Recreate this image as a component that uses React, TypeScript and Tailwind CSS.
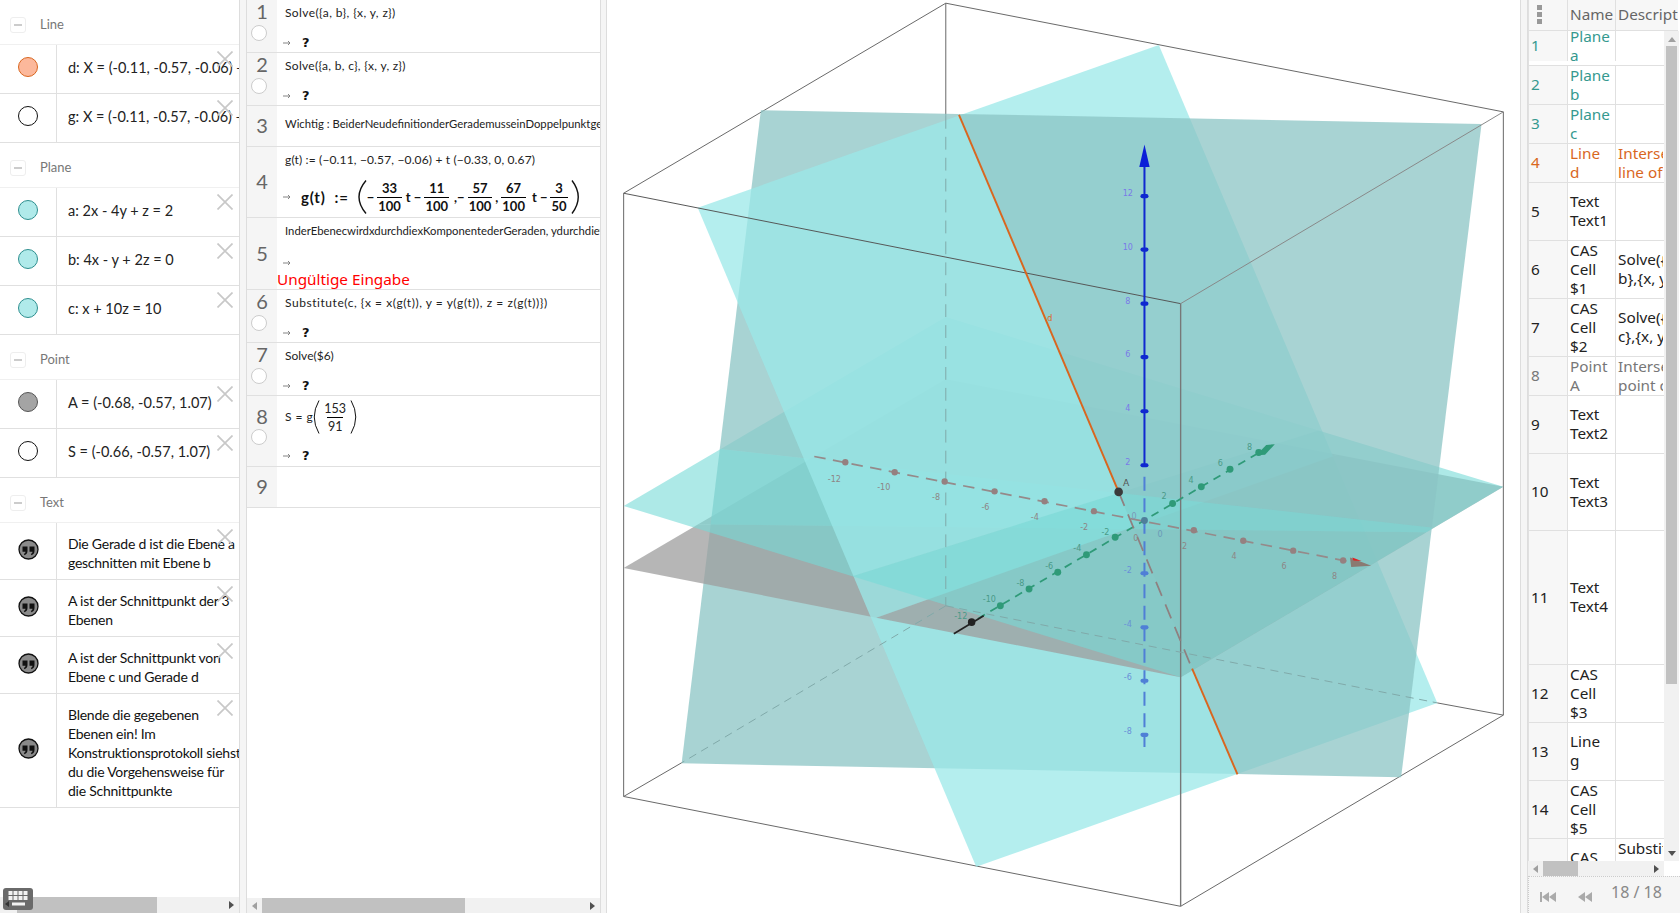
import React from "react";

type P = [number, number];
const half = (poly: P[], p: P, q: P, below: boolean): P[] => {
  const side = (a: P) => {
    const c = (q[0] - p[0]) * (a[1] - p[1]) - (q[1] - p[1]) * (a[0] - p[0]);
    return below ? c : -c;
  };
  const out: P[] = [];
  poly.forEach((a, i) => {
    const b = poly[(i + 1) % poly.length];
    const sa = side(a);
    const sb = side(b);
    if (sa >= 0) out.push(a);
    if (sa * sb < 0) {
      const t = sa / (sa - sb);
      out.push([a[0] + (b[0] - a[0]) * t, a[1] + (b[1] - a[1]) * t]);
    }
  });
  return out;
};
const pts = (poly: P[]) => poly.map((a) => a.join(",")).join(" ");

const planeA: P[] = [[955, 75], [1440, 1207], [637, 1489], [152, 355]];
const planeB: P[] = [[262, 187], [1517, 211], [1377, 1335], [124, 1311]];
const planeC: P[] = [[23, 868], [584, 543], [1555, 835], [993, 1163]];
const planeG: P[] = [[23, 975], [584, 650], [1555, 835], [993, 1163]];
const D1: P = [607, 195];
const D2: P = [1092, 1330];
const LCA: [P, P] = [[425, 988], [1250, 733]];
const LCB: [P, P] = [[192, 770], [1430, 905]];
const LGA: [P, P] = [[455, 1063], [1300, 768]];
const LGB: [P, P] = [[175, 900], [1300, 912]];
const cell = (poly: P[], la: [P, P], lb: [P, P], plusA: boolean, plusB: boolean) =>
  half(half(poly, la[0], la[1], plusA), lb[0], lb[1], plusB);

const colA = "rgba(155,232,232,0.75)";
const colB = "rgba(139,196,196,0.75)";
const colC = "rgba(118,218,215,0.6)";
const colG = "rgba(157,157,157,0.75)";

const xTicks: P[] = [[409, 793], [495, 810], [582, 826], [669, 843], [756, 860], [842, 877], [1016, 910], [1102, 928], [1189, 945], [1276, 962]];
const xLabels: [number, number, string][] = [[390, 827, "-12"], [476, 841, "-10"], [567, 858, "-8"], [653, 875, "-6"], [739, 893, "-4"], [825, 910, "-2"], [1000, 943, "2"], [1086, 960, "4"], [1173, 977, "6"], [1261, 994, "8"]];
const yTicks: P[] = [[679, 1040], [729, 1011], [779, 982], [829, 952], [879, 922], [979, 864], [1029, 835], [1079, 805], [1129, 776]];
const yLabels: [number, number, string][] = [[610, 1063, "-12"], [660, 1033, "-10"], [714, 1005, "-8"], [764, 976, "-6"], [813, 946, "-4"], [862, 918, "-2"], [964, 856, "2"], [1011, 828, "4"], [1062, 799, "6"], [1113, 771, "8"]];
const zUp: [number, string][] = [[335, "12"], [427, "10"], [520, "8"], [612, "6"], [705, "4"], [798, "2"]];
const zDown: [number, string][] = [[984, "-2"], [1077, "-4"], [1169, "-6"], [1262, "-8"]];

function Scene() {
  const labelFont = { fontFamily: "'DejaVu Sans', sans-serif" };
  return (
    <svg className="block w-full h-full" viewBox="-6 -2.5 1590 1571" preserveAspectRatio="none">
      <g stroke="#666" strokeWidth="1.7" fill="none">
        <polyline points="584,197 584,3 23,330 23,1368 993,1557 1555,1228 1555,190 584,3" />
      </g>
      <polygon points={pts(cell(planeG, LGA, LGB, false, false))} fill={colG} />
      <polygon points={pts(cell(planeC, LCA, LCB, false, false))} fill={colC} />
      <polygon points={pts(half(planeB, D1, D2, true))} fill={colB} />
      <polygon points={pts(cell(planeG, LGA, LGB, false, true))} fill={colG} />
      <polygon points={pts(cell(planeC, LCA, LCB, false, true))} fill={colC} />
      <polygon points={pts(planeA)} fill={colA} />
      <polygon points={pts(cell(planeG, LGA, LGB, true, false))} fill={colG} />
      <polygon points={pts(cell(planeC, LCA, LCB, true, false))} fill={colC} />
      <polygon points={pts(half(planeB, D1, D2, false))} fill={colB} />
      <polygon points={pts(cell(planeG, LGA, LGB, true, true))} fill={colG} />
      <polygon points={pts(cell(planeC, LCA, LCB, true, true))} fill={colC} />

      <g fill="none" strokeWidth="1.7">
        <line x1="23" y1="330" x2="993" y2="520" stroke="#555" />
        <line x1="993" y1="520" x2="1555" y2="190" stroke="#888" />
        <line x1="993" y1="520" x2="993" y2="1557" stroke="#777" strokeWidth="2.4" />
        <line x1="584" y1="197" x2="584" y2="1040" stroke="#7fa8a8" strokeDasharray="22 14" />
        <line x1="584" y1="1040" x2="124" y2="1310" stroke="#7fa8a8" strokeDasharray="14 10" />
        <line x1="584" y1="1040" x2="1440" y2="1207" stroke="#7fa8a8" strokeDasharray="14 10" />
        <line x1="124" y1="1310" x2="23" y2="1368" stroke="#666" />
        <line x1="1440" y1="1207" x2="1555" y2="1228" stroke="#666" />
      </g>

      <line x1="355" y1="783" x2="1282" y2="963" stroke="#958a8a" strokeWidth="3" strokeDasharray="20 13" />
      <line x1="640" y1="1062" x2="1130" y2="776" stroke="#2f9a78" strokeWidth="3" strokeDasharray="14 11" />
      <line x1="598" y1="1088" x2="650" y2="1057" stroke="#222" strokeWidth="3" />
      <line x1="930" y1="818" x2="930" y2="1283" stroke="#4f7fd6" strokeWidth="3.5" strokeDasharray="24 13" />
      <line x1="930" y1="282" x2="930" y2="798" stroke="#1028d0" strokeWidth="3.5" />
      <polygon points="930,246 921,285 939,285" fill="#0a1fd8" />
      <polygon points="1125,781 1142,763 1157,762 1140,780" fill="#2f9a78" />
      <polygon points="1288,957 1325,971 1290,973" fill="#8a7a72" />
      <polygon points="1292,957 1308,963 1294,962" fill="#e02020" />

      {xTicks.map(([x, y]) => (
        <circle key={x} cx={x} cy={y} r="5.5" fill="#958080" />
      ))}
      {yTicks.map(([x, y]) => (
        <circle key={x} cx={x} cy={y} r="6" fill="#2f9a78" />
      ))}
      {zUp.map(([y]) => (
        <rect key={y} x="923" y={y - 3.5} width="14" height="7" rx="3.5" fill="#0f28d0" />
      ))}
      {zDown.map(([y]) => (
        <rect key={y} x="923" y={y - 3.5} width="14" height="7" rx="3.5" fill="#4f7fd6" />
      ))}
      <circle cx="930" cy="893" r="6" fill="#4f7f9a" />
      <circle cx="629" cy="1068" r="6.5" fill="#222" />

      <g style={labelFont} fontSize="14">
        {xLabels.map(([x, y, t]) => (
          <text key={t} x={x} y={y} fill="#8d8585" textAnchor="middle">{t}</text>
        ))}
        {yLabels.map(([x, y, t]) => (
          <text key={t} x={x} y={y} fill="#4a9a88" textAnchor="middle">{t}</text>
        ))}
        {zUp.map(([y, t]) => (
          <text key={t} x="901" y={y} fill="#7a7ae8" textAnchor="middle">{t}</text>
        ))}
        {zDown.map(([y, t]) => (
          <text key={t} x="901" y={y - 1} fill="#6a90d8" textAnchor="middle">{t}</text>
        ))}
        <text x="912" y="890" fill="#7a9ab8" textAnchor="middle">0</text>
        <text x="915" y="928" fill="#8d8585" textAnchor="middle">0</text>
        <text x="957" y="921" fill="#6a9ab8" textAnchor="middle">0</text>
        <text x="898" y="833" fill="#555" textAnchor="middle" fontSize="16">A</text>
        <text x="765" y="550" fill="#d9661f" textAnchor="middle">d</text>
      </g>

      <line x1="607" y1="195" x2="885" y2="844" stroke="#d9661f" strokeWidth="3.4" />
      <line x1="885" y1="844" x2="1012" y2="1146" stroke="#8f8080" strokeWidth="3" strokeDasharray="26 16" />
      <line x1="1013" y1="1148" x2="1092" y2="1330" stroke="#d9661f" strokeWidth="3.4" />
      <circle cx="885" cy="844" r="7.5" fill="#3a3a3a" />
    </svg>
  );
}

const cm = "font-['Lato','Open_Sans',sans-serif]";

function CloseX() {
  return (
    <svg className="absolute right-[6px] top-[6px] w-[16px] h-[16px]" viewBox="0 0 16 16">
      <path d="M0.5 0.5 L15.5 15.5 M15.5 0.5 L0.5 15.5" stroke="#c8c8c8" strokeWidth="1.7" fill="none" />
    </svg>
  );
}

function Group({ label }: { label: string }) {
  return (
    <div className="h-[45px] flex items-center border-b border-[#f0f0f0] pl-[10px] pt-[5px]">
      <div className="w-[16px] h-[16px] rounded-[3px] border border-[#eeeeee] flex items-center justify-center">
        <div className="w-[8px] h-[2px] bg-[#cccccc]" />
      </div>
      <span className={`ml-[14px] text-[13px] text-[#777777] ${cm}`}>{label}</span>
    </div>
  );
}

function Marble({ fill, border }: { fill: string; border: string }) {
  return (
    <div
      className="w-[20px] h-[20px] rounded-full border"
      style={{ backgroundColor: fill, borderColor: border }}
    />
  );
}

function QuoteMarble() {
  return (
    <svg className="w-[21px] h-[21px]" viewBox="0 0 21 21">
      <circle cx="10.5" cy="10.5" r="9.5" fill="#8a8a8a" stroke="#111" strokeWidth="1.3" />
      <path d="M4.5 7.5h5v4.5c0 2.2-1.2 3.6-3 4.2l-.6-1.2c1-.5 1.6-1.2 1.6-2.2H4.5z" fill="#111" />
      <path d="M11.5 7.5h5v4.5c0 2.2-1.2 3.6-3 4.2l-.6-1.2c1-.5 1.6-1.2 1.6-2.2h-3z" fill="#111" />
    </svg>
  );
}

function AlgRow({ h, marble, text, children }: { h: string; marble: React.ReactNode; text?: boolean; children: React.ReactNode }) {
  return (
    <div className={`relative flex border-b border-[#e0e0e0] overflow-hidden ${h}`}>
      <div className="w-[57px] shrink-0 border-r border-[#e0e0e0] flex items-center justify-center pb-[4px]">{marble}</div>
      {text ? (
        <div className={`flex-1 min-w-0 pl-[11px] pt-[11px] whitespace-nowrap text-[14px] tracking-[-0.25px] leading-[19px] text-[#111111] ${cm}`}>
          {children}
        </div>
      ) : (
        <div className={`flex-1 min-w-0 pl-[11px] pb-[4px] flex items-center whitespace-nowrap text-[14.5px] leading-[19px] text-[#222222] ${cm}`}>
          {children}
        </div>
      )}
      <CloseX />
    </div>
  );
}

function Tri({ dir, className }: { dir: "l" | "r" | "u" | "d"; className?: string }) {
  const p = { l: "6,0 6,8 1,4", r: "2,0 2,8 7,4", u: "0,6 8,6 4,1", d: "0,2 8,2 4,7" }[dir];
  return (
    <svg className={`w-[8px] h-[8px] ${className ?? ""}`} viewBox="0 0 8 8">
      <polygon points={p} fill="currentColor" />
    </svg>
  );
}

function Left() {
  const planeFill = "#b0eaea";
  const planeBorder = "#2e8f8f";
  return (
    <div className="relative w-[240px] shrink-0 h-full flex flex-col border-r border-[#dddddd]">
      <div className="flex-1 overflow-hidden">
        <Group label="Line" />
        <AlgRow h="h-[49px]" marble={<Marble fill="#fcb89b" border="#d9661f" />}>
          d: X = (-0.11, -0.57, -0.06) + t (-0.33, 0, 0.67)
        </AlgRow>
        <AlgRow h="h-[49px]" marble={<Marble fill="#ffffff" border="#111111" />}>
          g: X = (-0.11, -0.57, -0.06) + t (-0.33, 0, 0.67)
        </AlgRow>
        <Group label="Plane" />
        <AlgRow h="h-[49px]" marble={<Marble fill={planeFill} border={planeBorder} />}>a: 2x - 4y + z = 2</AlgRow>
        <AlgRow h="h-[49px]" marble={<Marble fill={planeFill} border={planeBorder} />}>b: 4x - y + 2z = 0</AlgRow>
        <AlgRow h="h-[49px]" marble={<Marble fill={planeFill} border={planeBorder} />}>c: x + 10z = 10</AlgRow>
        <Group label="Point" />
        <AlgRow h="h-[49px]" marble={<Marble fill="#a4a4a4" border="#555555" />}>A = (-0.68, -0.57, 1.07)</AlgRow>
        <AlgRow h="h-[49px]" marble={<Marble fill="#ffffff" border="#111111" />}>S = (-0.66, -0.57, 1.07)</AlgRow>
        <Group label="Text" />
        <AlgRow h="h-[57px]" text marble={<QuoteMarble />}>
          Die Gerade d ist die Ebene a<br />geschnitten mit Ebene b
        </AlgRow>
        <AlgRow h="h-[57px]" text marble={<QuoteMarble />}>
          A ist der Schnittpunkt der 3<br />Ebenen
        </AlgRow>
        <AlgRow h="h-[57px]" text marble={<QuoteMarble />}>
          A ist der Schnittpunkt von<br />Ebene c und Gerade d
        </AlgRow>
        <AlgRow h="h-[114px]" text marble={<QuoteMarble />}>
          Blende die gegebenen<br />Ebenen ein! Im<br />Konstruktionsprotokoll siehst<br />du die Vorgehensweise für<br />die Schnittpunkte
        </AlgRow>
      </div>
      <div className="h-[16px] shrink-0 bg-[#f1f1f1] flex items-center pl-[17px] pr-[4px]">
        <div className="w-[140px] h-full bg-[#c1c1c1]" />
        <Tri dir="r" className="ml-auto text-[#505050]" />
      </div>
      <svg className="absolute left-[3px] top-[888px] w-[30px] h-[22px]" viewBox="0 0 30 22">
        <rect width="30" height="22" rx="3" fill="#6a6a6a" />
        {[5, 10, 15, 20].flatMap((x) =>
          [3, 8].map((y) => <rect key={`${x}-${y}`} x={x + 0.5} y={y} width="4" height="4" fill="#f2f2f2" />)
        )}
        <rect x="9" y="14.5" width="13" height="3" fill="#f2f2f2" />
        <polygon points="2,16 6,13 6,19" fill="#333" />
      </svg>
    </div>
  );
}

function Arrow() {
  return (
    <svg className="w-[8px] h-[6px] shrink-0" viewBox="0 0 8 6">
      <path d="M0 3h6.5M5 1l2 2-2 2" stroke="#777" strokeWidth="0.9" fill="none" />
    </svg>
  );
}

function Paren({ right, w, h, sw }: { right?: boolean; w: number; h: number; sw: number }) {
  const d = right ? `M1 0.5 Q${w * 1.5} ${h / 2} 1 ${h - 0.5}` : `M${w - 1} 0.5 Q${-w * 0.5} ${h / 2} ${w - 1} ${h - 0.5}`;
  return (
    <svg className="shrink-0" width={w} height={h} viewBox={`0 0 ${w} ${h}`}>
      <path d={d} stroke="#111" strokeWidth={sw} fill="none" />
    </svg>
  );
}

function Frac({ n, d }: { n: string; d: string }) {
  return (
    <span className="inline-flex flex-col items-center leading-[15px] mx-[3px]">
      <span className="px-[1px] pb-[1px]">{n}</span>
      <span className="px-[1px] pt-[1px] border-t border-black">{d}</span>
    </span>
  );
}

function CasRow({
  num,
  h,
  marble = true,
  numTop,
  circleTop = "mt-[3px]",
  children,
}: {
  num: number;
  h: string;
  marble?: boolean;
  numTop?: string;
  circleTop?: string;
  children?: React.ReactNode;
}) {
  return (
    <div className={`flex border-b border-[#e0e0e0] overflow-hidden ${h}`}>
      <div className={`w-[30px] shrink-0 bg-[#f5f5f5] flex flex-col text-[20px] leading-[24px] text-[#666666] ${cm} ${marble ? "" : "justify-center"} ${numTop ?? ""}`}>
        <span className="text-center -translate-y-[1px]">{num}</span>
        {marble && <span className={`ml-[4px] w-[16px] h-[16px] rounded-full border-[1.5px] border-[#cccccc] bg-white -translate-y-[2px] ${circleTop}`} />}
      </div>
      <div className={`flex-1 min-w-0 flex flex-col text-[12px] leading-[16px] text-[#222222] whitespace-nowrap overflow-hidden ${cm}`}>
        {children}
      </div>
    </div>
  );
}

function Output() {
  return (
    <div className="pl-[6px] flex items-center h-[16px]">
      <Arrow />
      <span className="ml-[11px] font-bold text-[13px] text-[#111111] font-['DejaVu_Sans',sans-serif]">?</span>
    </div>
  );
}

function Cas() {
  return (
    <div className="w-[353px] shrink-0 h-full flex flex-col border-l border-r border-[#dddddd] box-content">
      <div className="flex-1 overflow-hidden">
        <CasRow num={1} h="h-[53px]">
          <div className="pl-[8px] pt-[5px] tracking-[0.4px]">Solve({"{"}a, b{"}"}, {"{"}x, y, z{"}"})</div>
          <div className="mt-[14px]"><Output /></div>
        </CasRow>
        <CasRow num={2} h="h-[53px]">
          <div className="pl-[8px] pt-[5px] tracking-[0.3px]">Solve({"{"}a, b, c{"}"}, {"{"}x, y, z{"}"})</div>
          <div className="mt-[14px]"><Output /></div>
        </CasRow>
        <CasRow num={3} h="h-[41px]" marble={false}>
          <div className="pl-[8px] pt-[10px] text-[11.3px]">Wichtig : BeiderNeudefinitionderGerademusseinDoppelpunktgesetztwerden</div>
        </CasRow>
        <CasRow num={4} h="h-[71px]" marble={false}>
          <div className="pl-[8px] pt-[5px] tracking-[0.15px]">g(t) := (−0.11, −0.57, −0.06) + t (−0.33, 0, 0.67)</div>
          <div className="pl-[6px] flex items-center mt-[12px] font-bold text-[13px] text-[#111111]">
            <Arrow />
            <span className="ml-[10px] text-[15px] tracking-[0.8px]">g(t)&nbsp;&nbsp;:=</span>
            <span className="ml-[8px]"><Paren w={10} h={34} sw={1.4} /></span>
            <span>−</span>
            <Frac n="33" d="100" />
            <span className="ml-[1px]">t −</span>
            <Frac n="11" d="100" />
            <span className="ml-[2px]">,−</span>
            <Frac n="57" d="100" />
            <span>,</span>
            <Frac n="67" d="100" />
            <span className="ml-[3px]">t −</span>
            <Frac n="3" d="50" />
            <Paren right w={9} h={34} sw={1.4} />
          </div>
        </CasRow>
        <CasRow num={5} h="h-[72px]" marble={false}>
          <div className="pl-[8px] pt-[5px] text-[11.3px]">InderEbenecwirdxdurchdiexKomponentederGeraden, ydurchdieyKomponente</div>
          <div className="mt-[16px] pl-[6px] flex items-center h-[16px]"><Arrow /></div>
          <div className="text-[15.3px] leading-[19px] text-[#ff0000] font-['Noto_Sans',sans-serif]">Ungültige Eingabe</div>
        </CasRow>
        <CasRow num={6} h="h-[53px]">
          <div className="pl-[8px] pt-[5px] tracking-[0.55px]">Substitute(c, {"{"}x = x(g(t)), y = y(g(t)), z = z(g(t)){"}"})</div>
          <div className="mt-[14px]"><Output /></div>
        </CasRow>
        <CasRow num={7} h="h-[53px]">
          <div className="pl-[8px] pt-[5px]">Solve($6)</div>
          <div className="mt-[14px]"><Output /></div>
        </CasRow>
        <CasRow num={8} h="h-[71px]" numTop="pt-[9px]" circleTop="mt-[2px]">
          <div className="pl-[8px] pt-[5px] flex items-center h-[37px]">
            <span className="tracking-[0.5px]">S = g</span>
            <Paren w={7} h={34} sw={1} />
            <span className="text-[12.5px]"><Frac n="153" d="91" /></span>
            <Paren right w={7} h={34} sw={1} />
          </div>
          <div className="mt-[15px]"><Output /></div>
        </CasRow>
        <CasRow num={9} h="h-[41px]" marble={false} />
      </div>
      <div className="h-[15px] shrink-0 bg-[#f1f1f1] flex items-center pl-[4px] pr-[4px] text-[#505050]">
        <Tri dir="l" className="text-[#a0a0a0]" />
        <div className="ml-[3px] w-[203px] h-full bg-[#c1c1c1]" />
        <Tri dir="r" className="ml-auto" />
      </div>
    </div>
  );
}

type TRow = { h: string; n: string; name: string[]; desc?: string[]; color?: string };
const rows: TRow[] = [
  { h: "h-[35px] pb-[4px]", n: "1", name: ["Plane", "a"], color: "text-[#35998f]" },
  { h: "h-[39px]", n: "2", name: ["Plane", "b"], color: "text-[#35998f]" },
  { h: "h-[39px]", n: "3", name: ["Plane", "c"], color: "text-[#35998f]" },
  { h: "h-[39px]", n: "4", name: ["Line", "d"], desc: ["Intersection", "line of"], color: "text-[#d9671e]" },
  { h: "h-[58px]", n: "5", name: ["Text", "Text1"] },
  { h: "h-[58px]", n: "6", name: ["CAS", "Cell", "$1"], desc: ["Solve({a,", "b},{x, y, z})"] },
  { h: "h-[58px]", n: "7", name: ["CAS", "Cell", "$2"], desc: ["Solve({a,b,", "c},{x, y, z})"] },
  { h: "h-[39px]", n: "8", name: ["Point", "A"], desc: ["Intersection", "point of"], color: "text-[#777777]" },
  { h: "h-[58px]", n: "9", name: ["Text", "Text2"] },
  { h: "h-[77px]", n: "10", name: ["Text", "Text3"] },
  { h: "h-[134px]", n: "11", name: ["Text", "Text4"] },
  { h: "h-[58px]", n: "12", name: ["CAS", "Cell", "$3"] },
  { h: "h-[58px]", n: "13", name: ["Line", "g"] },
  { h: "h-[58px]", n: "14", name: ["CAS", "Cell", "$5"] },
  { h: "h-[77px]", n: "15", name: ["CAS", "Cell", "$6"], desc: ["Substitute(c,", "{x=", "x(g(t)),", "y=y(g(t))"] },
];

function Table() {
  return (
    <div className="flex-1 min-w-0 h-full flex flex-col border-l border-[#dddddd] bg-white font-['Noto_Sans',sans-serif] text-[15.3px] leading-[19px] text-[#222222]">
      <div className="flex-1 min-h-0 flex flex-col overflow-hidden">
        <div className="h-[31px] shrink-0 flex border-b border-[#e0e0e0] bg-[#f7f7f7] text-[#666666] mr-[2px] border-l">
          <div className="w-[39px] shrink-0 border-r border-[#e0e0e0] flex flex-col items-center gap-[2px] pt-[5px] pr-[18px]">
            <span className="w-[5px] h-[5px] bg-[#999999]" />
            <span className="w-[5px] h-[5px] bg-[#999999]" />
            <span className="w-[5px] h-[5px] bg-[#999999]" />
          </div>
          <div className="w-[48px] shrink-0 border-r border-[#e0e0e0] pl-[2px] pb-[1px] flex items-center overflow-hidden">Name</div>
          <div className="flex-1 pl-[2px] pb-[1px] flex items-center overflow-hidden whitespace-nowrap">Description</div>
        </div>
        <div className="flex-1 min-h-0 flex">
          <div className="w-[136px] shrink-0 overflow-hidden">
            {rows.map((r) => (
              <div key={r.n} className={`flex shrink-0 border-b border-[#e0e0e0] border-l overflow-hidden ${r.h} ${r.color ?? ""}`}>
                <div className="w-[39px] shrink-0 bg-[#f7f7f7] border-r border-[#e0e0e0] flex items-center pl-[2px] pb-[1px]">{r.n}</div>
                <div className="w-[48px] shrink-0 border-r border-[#e0e0e0] pl-[2px] pb-[1px] flex flex-col justify-center">
                  {r.name.map((t) => <div key={t}>{t}</div>)}
                </div>
                <div className="w-[47px] shrink-0 pl-[2px] pb-[1px] flex flex-col justify-center overflow-hidden whitespace-nowrap">
                  {r.desc?.map((t) => <div key={t}>{t}</div>)}
                </div>
              </div>
            ))}
          </div>
          <div className="w-[15px] shrink-0 bg-[#f1f1f1] flex flex-col items-center text-[#a0a0a0] pt-[5px] pb-[4px]">
            <Tri dir="u" />
            <div className="w-[11px] mt-[2px] h-[638px] bg-[#c1c1c1]" />
            <Tri dir="d" className="mt-auto text-[#505050]" />
          </div>
          <div className="flex-1" />
        </div>
        <div className="h-[15px] shrink-0 w-[136px] bg-[#f1f1f1] flex items-center pl-[4px] pr-[4px] text-[#505050]">
          <Tri dir="l" className="text-[#a0a0a0]" />
          <div className="ml-[3px] w-[35px] h-full bg-[#c1c1c1]" />
          <Tri dir="r" className="ml-auto" />
        </div>
      </div>
      <div className="h-[37px] shrink-0 border-t border-dotted border-[#cccccc] bg-[#f5f5f5] border-l flex items-center text-[#888888]">
        <svg className="ml-[11px] w-[17px] h-[10px] mt-[3px]" viewBox="0 0 17 10">
          <rect x="0" y="0" width="2" height="10" fill="#aaaaaa" />
          <polygon points="2,5 9,0 9,10" fill="#aaaaaa" />
          <polygon points="9,5 16,0 16,10" fill="#aaaaaa" />
        </svg>
        <svg className="ml-[20px] w-[16px] h-[10px] mt-[3px]" viewBox="0 0 16 10">
          <polygon points="1,5 8,0 8,10" fill="#aaaaaa" />
          <polygon points="8,5 15,0 15,10" fill="#aaaaaa" />
        </svg>
        <span className="ml-[18px] text-[16px] -mt-[5px] whitespace-nowrap">18 / 18</span>
      </div>
    </div>
  );
}

export default function App() {
  return (
    <div className="flex w-[1680px] h-[913px] overflow-hidden bg-white">
      <Left />
      <div className="w-[6px] shrink-0 bg-[#f5f5f5]" />
      <Cas />
      <div className="w-[5px] shrink-0 bg-[#f5f5f5]" />
      <div className="w-[914px] shrink-0 h-full border-l border-[#dddddd]">
        <Scene />
      </div>
      <div className="w-[7px] shrink-0 bg-[#f5f5f5] border-l border-[#dddddd]" />
      <Table />
    </div>
  );
}
